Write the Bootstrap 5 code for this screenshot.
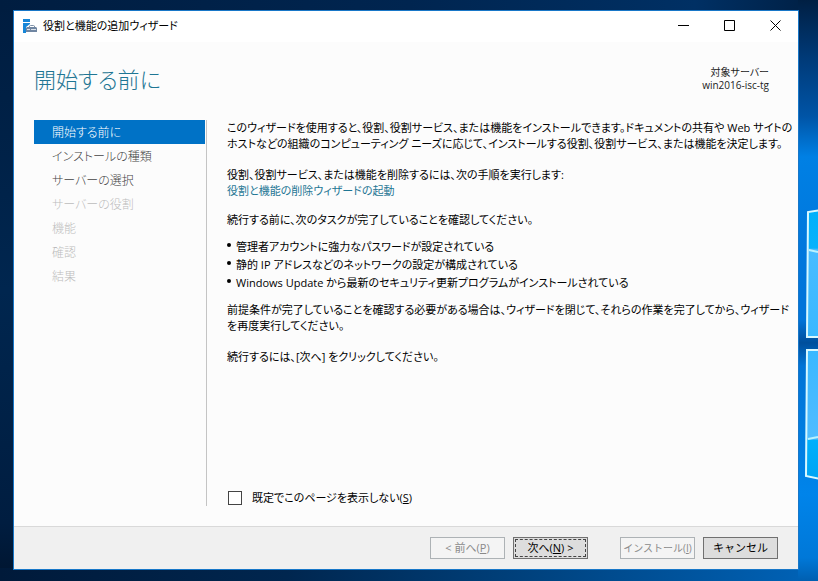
<!DOCTYPE html>
<html lang="ja">
<head>
<meta charset="utf-8">
<meta name="viewport" content="width=device-width, initial-scale=1">
<title>役割と機能の追加ウィザード</title>
<link href="https://cdn.jsdelivr.net/npm/bootstrap@5.3.0/dist/css/bootstrap.min.css" rel="stylesheet">
<style>
/* proportional kana, as in a desktop UI font */
body{font-family:"Open Sans","Noto Sans CJK JP",sans-serif;font-feature-settings:"palt";font-size:11px;line-height:16px;color:#000;background:#00224a}
.desktop{padding:10px 19px 11px 13px}
.wallpaper{z-index:-1}
.wizard{background:#fcfcfc;border:1px solid #1877c8;min-width:0}
.titlebar{height:31px;padding-left:9px;background:#fff}
.titlebar h1{font-size:11px;line-height:16px;padding-top:7px}
.caption-btn{width:46px;height:28px;border:0;background:none;padding:0}
.caption-btn svg{display:block;margin:0 auto}
.page-head{padding:19px 29px 0 20px;height:78px}
.page-head h2{font-size:22px;line-height:36px;font-weight:300;color:#1f7694}
.target{font-size:10px;line-height:13px;padding-top:5px;color:#222}
.page-main{padding:0 20px 20px}
.steps{width:173px;border-right:1px solid #c4c4c4;padding-right:1px}
.steps .nav-link{font-size:12px;line-height:22px;padding:2px 0 0 18px;border-radius:0;color:#444;font-weight:300}
.steps .nav-link.active{background:#0072c6;color:#fff}
.steps .nav-link.disabled{color:#bcbcbc}
.copy{padding-left:20px;min-width:0}
.copy p{margin-bottom:15px}
.copy .near{margin-bottom:13px}
.copy .close-by{margin-bottom:10px}
.copy a{color:#1f7694}
.tasks{margin-bottom:10px;line-height:18px}
.tasks li{padding-left:9px;position:relative}
.tasks li::before{content:"";position:absolute;left:0;top:5px;width:4px;height:4px;border-radius:50%;background:#000}
.skip{gap:10px;padding-left:1px}
.skip .form-check-input{width:14px;height:14px;margin:0;border:1px solid #444;border-radius:0;background-color:#fff}
.actions{height:43px;background:#f0f0f0;border-top:1px solid #d9d9d9;padding:0 20px;gap:8px}
.push{width:75px;height:22px;padding:0;font-size:11px;line-height:20px;border:1px solid #707070;border-radius:0;background:#ddd;color:#000;white-space:nowrap}
.push:disabled{background:#f4f4f4;border-color:#adb2b5;color:#8a8a8a;opacity:1}
.push.focused{outline:1px dashed #444;outline-offset:-3px}
.push.install{margin-left:24px;font-size:10px}
</style>
<script src="https://cdn.jsdelivr.net/npm/bootstrap@5.3.0/dist/js/bootstrap.bundle.min.js" defer></script>
</head>
<body>
<svg class="wallpaper position-fixed top-0 start-0 w-100 h-100" viewBox="0 0 818 581" preserveAspectRatio="none" aria-hidden="true">
  <defs>
    <linearGradient id="top"><stop offset="0" stop-color="#001d40"/><stop offset=".5" stop-color="#002550"/><stop offset=".85" stop-color="#003064"/><stop offset="1" stop-color="#001f43"/></linearGradient>
    <linearGradient id="left" x2="0" y2="1"><stop offset="0" stop-color="#001d40"/><stop offset=".5" stop-color="#00264f"/><stop offset=".9" stop-color="#001d40"/><stop offset="1" stop-color="#00152f"/></linearGradient>
    <linearGradient id="bottom"><stop offset="0" stop-color="#001a3a"/><stop offset=".35" stop-color="#00264f"/><stop offset=".65" stop-color="#00427e"/><stop offset="1" stop-color="#0063b8"/></linearGradient>
    <linearGradient id="right" x2="0" y2="1"><stop offset="0" stop-color="#001f43"/><stop offset=".1" stop-color="#003a78"/><stop offset=".2" stop-color="#0054a6"/><stop offset=".27" stop-color="#0080e4"/><stop offset=".5" stop-color="#0074da"/><stop offset=".55" stop-color="#0074da"/><stop offset=".59" stop-color="#004f9c"/><stop offset=".63" stop-color="#0074d6"/><stop offset=".85" stop-color="#0084ea"/><stop offset=".96" stop-color="#0078d8"/><stop offset="1" stop-color="#005fb0"/></linearGradient>
    <linearGradient id="pane" x2="0" y2="1"><stop offset="0" stop-color="#00b0fa"/><stop offset=".3" stop-color="#08b2fc"/><stop offset=".31" stop-color="#48bcff"/><stop offset="1" stop-color="#3ab8ff"/></linearGradient>
    <linearGradient id="pane2" x2="0" y2="1"><stop offset="0" stop-color="#3ab8ff"/><stop offset=".69" stop-color="#50bcff"/><stop offset=".7" stop-color="#00b0fc"/><stop offset="1" stop-color="#00a4f4"/></linearGradient>
  </defs>
  <path fill="url(#left)" d="M0 0H14V581H0z"/>
  <path fill="url(#top)" d="M0 0H818V12H0z"/>
  <path fill="url(#bottom)" d="M0 568H818V581H0z"/>
  <path fill="url(#right)" d="M798 0H818V581H798z"/>
  <path fill="url(#pane)" stroke="#d8f8ff" stroke-width="2" d="M821 210L808 212L807 337H821z"/>
  <path fill="url(#pane2)" stroke="#d8f8ff" stroke-width="2" d="M821 350H807L806 476L821 479z"/>
  <path stroke="#b8f2ff" stroke-width="2" d="M809 250L818 252M808 439L818 437"/>
</svg>
<div class="desktop min-vh-100 d-flex">
  <main class="wizard flex-fill d-flex flex-column">
    <header class="titlebar d-flex align-items-start">
      <svg class="flex-shrink-0 mt-2 me-1" width="16" height="14" viewBox="0 0 16 14" aria-hidden="true"><path fill="#1686d8" d="M0 0H7V3H0zM0 4H7V5L3 8V14H0z"/><path fill="none" stroke="#8092a8" d="M6.500 8V7L7.500 6.500H10.500L11.500 7V8"/><path fill="#7086a2" d="M4 8H13L14 9V13H3V9z"/><path stroke="#dce3eb" d="M4 10.500H7M8 10.500H13"/></svg>
      <h1 class="fw-normal mb-0 flex-fill">役割と機能の追加ウィザード</h1>
      <button class="caption-btn" type="button" aria-label="最小化"><svg width="11" height="11" viewBox="0 0 11 11"><path stroke="#000" d="M0 5.500H11"/></svg></button>
      <button class="caption-btn" type="button" aria-label="最大化"><svg width="11" height="11" viewBox="0 0 11 11"><path fill="none" stroke="#000" d="M.5.500H10.500V10.500H.5z"/></svg></button>
      <button class="caption-btn" type="button" aria-label="閉じる"><svg width="11" height="11" viewBox="0 0 11 11"><path stroke="#000" d="M.5.500L10.500 10.500M10.500.500L.5 10.500"/></svg></button>
    </header>
    <div class="page-head d-flex justify-content-between">
      <h2 class="mb-0">開始する前に</h2>
      <div class="target text-end">対象サーバー<br>win2016-isc-tg</div>
    </div>
    <div class="page-main d-flex flex-fill">
      <nav class="steps nav flex-column flex-shrink-0" aria-label="手順">
        <a class="nav-link active" aria-current="step" href="#">開始する前に</a>
        <a class="nav-link" href="#">インストールの種類</a>
        <a class="nav-link" href="#">サーバーの選択</a>
        <a class="nav-link disabled" aria-disabled="true" href="#">サーバーの役割</a>
        <a class="nav-link disabled" aria-disabled="true" href="#">機能</a>
        <a class="nav-link disabled" aria-disabled="true" href="#">確認</a>
        <a class="nav-link disabled" aria-disabled="true" href="#">結果</a>
      </nav>
      <section class="copy flex-fill d-flex flex-column text-nowrap">
        <p>このウィザードを使用すると、役割、役割サービス、または機能をインストールできます。ドキュメントの共有や Web サイトの<br>ホストなどの組織のコンピューティング ニーズに応じて、インストールする役割、役割サービス、または機能を決定します。</p>
        <p class="near">役割、役割サービス、または機能を削除するには、次の手順を実行します:<br><a class="text-decoration-none" href="#">役割と機能の削除ウィザードの起動</a></p>
        <p class="close-by">続行する前に、次のタスクが完了していることを確認してください。</p>
        <ul class="tasks list-unstyled">
          <li>管理者アカウントに強力なパスワードが設定されている</li>
          <li>静的 IP アドレスなどのネットワークの設定が構成されている</li>
          <li>Windows Update から最新のセキュリティ更新プログラムがインストールされている</li>
        </ul>
        <p>前提条件が完了していることを確認する必要がある場合は、ウィザードを閉じて、それらの作業を完了してから、ウィザード<br>を再度実行してください。</p>
        <p>続行するには、[次へ] をクリックしてください。</p>
        <div class="skip d-flex align-items-center mt-auto">
          <input class="form-check-input" type="checkbox" id="skip">
          <label for="skip">既定でこのページを表示しない(<u>S</u>)</label>
        </div>
      </section>
    </div>
    <footer class="actions d-flex align-items-center justify-content-end">
      <button class="btn push" type="button" disabled>&lt; 前へ(<u>P</u>)</button>
      <button class="btn push focused" type="button">次へ(<u>N</u>) &gt;</button>
      <button class="btn push install" type="button" disabled>インストール(<u>I</u>)</button>
      <button class="btn push" type="button">キャンセル</button>
    </footer>
  </main>
</div>
</body>
</html>
